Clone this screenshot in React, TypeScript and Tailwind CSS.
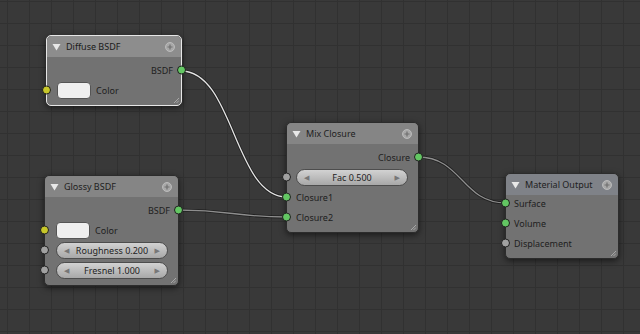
import React from "react";

type Pt = [number, number];

function link(a: Pt, b: Pt) {
  const d = Math.abs(b[0] - a[0]) * 0.5;
  return `M${a[0]} ${a[1]} C${a[0] + d} ${a[1]} ${b[0] - d} ${b[1]} ${b[0]} ${b[1]}`;
}

function Socket({ side, color }: { side: "l" | "r"; color: string }) {
  return (
    <span
      className={`absolute top-1/2 -translate-y-1/2 w-[9px] h-[9px] rounded-full border border-[#202020] ${
        side === "l" ? "left-[-5px]" : "right-[-5px]"
      }`}
      style={{ background: color }}
    />
  );
}

const GREEN = "#63c763";
const GRAY = "#a1a1a1";
const YELLOW = "#c7c729";

function Header({ title, selected, bg }: { title: string; selected?: boolean; bg: string }) {
  return (
    <div className={`flex items-center h-[21px] pl-[5px] pr-[6px] rounded-t-[5px] ${bg}`}>
      <svg width="9" height="8" viewBox="0 0 9 8" className="mr-[5px]">
        <path d="M0.5 1 L8.5 1 L4.5 7.5 Z" fill="#e8e8e8" />
      </svg>
      <span className={`flex-1 ${selected ? "text-[#1a1a1a]" : "text-[#1e1e1e]"}`}>{title}</span>
      <svg width="10" height="10" viewBox="0 0 10 10">
        <circle cx="5" cy="5" r="4.5" fill="#a8a8a8" stroke="#c4c4c4" strokeWidth="0.8" />
        <path d="M5 2.5 V7.5 M2.5 5 H7.5" stroke="#6e6e6e" strokeWidth="1.2" />
      </svg>
    </div>
  );
}

function Resize() {
  return (
    <svg width="6" height="6" viewBox="0 0 6 6" className="absolute right-[2px] bottom-[2px]">
      <path d="M1 6 L6 1 M3.5 6 L6 3.5" stroke="#b5b5b5" strokeWidth="0.8" />
    </svg>
  );
}

function Slider({ label }: { label: string }) {
  return (
    <div className="flex-1 h-[17px] rounded-full border border-[#4d4d4d] bg-gradient-to-b from-[#d2d2d2] to-[#a8a8a8] flex items-center px-[7px] text-[#1e1e1e]">
      <span className="text-[7px] text-[#777]">◀</span>
      <span className="flex-1 text-center">{label}</span>
      <span className="text-[7px] text-[#777]">▶</span>
    </div>
  );
}

function Swatch() {
  return <div className="w-[34px] h-[17px] rounded-[4px] bg-[#efefef] border border-[#555]" />;
}

function Row({ children, className = "" }: { children: React.ReactNode; className?: string }) {
  return <div className={`relative h-5 flex items-center ${className}`}>{children}</div>;
}

function Node({
  x,
  y,
  w,
  selected,
  children,
}: {
  x: number;
  y: number;
  w: number;
  selected?: boolean;
  children: React.ReactNode;
}) {
  return (
    <div
      className={`absolute rounded-[5px] bg-[#727272] shadow-[0_2px_6px_rgba(0,0,0,0.55)] border ${
        selected ? "border-[#e6e6e6]" : "border-[#2c2c2c]"
      }`}
      style={{ left: x, top: y, width: w }}
    >
      {children}
      <Resize />
    </div>
  );
}

export default function App() {
  return (
    <div
      className="relative w-[640px] h-[334px] overflow-hidden bg-[#393939] bg-[linear-gradient(to_right,#313131_1px,transparent_1px),linear-gradient(to_bottom,#313131_1px,transparent_1px)] bg-[size:22px_22px] bg-[position:7px_1px] text-[9px] leading-none text-[#1e1e1e]"
      style={{ fontFamily: '"Noto Sans", "DejaVu Sans", sans-serif' }}
    >
      <svg className="absolute inset-0" width="640" height="334">
        {[
          { p: link([181, 71], [287, 197]), c: "#e4e4e4" },
          { p: link([178, 210], [287, 217]), c: "#8e8e8e" },
          { p: link([418, 157], [506, 203]), c: "#8e8e8e" },
        ].map((l, i) => (
          <g key={i} fill="none">
            <path d={l.p} stroke="rgba(0,0,0,0.45)" strokeWidth="3" />
            <path d={l.p} stroke={l.c} strokeWidth="1.3" />
          </g>
        ))}
      </svg>

      <Node x={46} y={35} w={136} selected>
        <Header title="Diffuse BSDF" selected bg="bg-[#8d8d8d]" />
        <div className="pt-[3px] pb-[5px]">
          <Row className="justify-end pr-[8px]">
            BSDF
            <Socket side="r" color={GREEN} />
          </Row>
          <Row className="pl-[10px] gap-[5px]">
            <Swatch />
            Color
            <Socket side="l" color={YELLOW} />
          </Row>
        </div>
      </Node>

      <Node x={44} y={175} w={135}>
        <Header title="Glossy BSDF" bg="bg-[#858585]" />
        <div className="pt-[3px] pb-[5px]">
          <Row className="justify-end pr-[8px]">
            BSDF
            <Socket side="r" color={GREEN} />
          </Row>
          <Row className="pl-[11px] gap-[5px]">
            <Swatch />
            Color
            <Socket side="l" color={YELLOW} />
          </Row>
          <Row className="pl-[11px] pr-[10px]">
            <Slider label="Roughness 0.200" />
            <Socket side="l" color={GRAY} />
          </Row>
          <Row className="pl-[11px] pr-[10px]">
            <Slider label="Fresnel 1.000" />
            <Socket side="l" color={GRAY} />
          </Row>
        </div>
      </Node>

      <Node x={286} y={122} w={133}>
        <Header title="Mix Closure" bg="bg-[#858585]" />
        <div className="pt-[3px] pb-[5px]">
          <Row className="justify-end pr-[8px]">
            Closure
            <Socket side="r" color={GREEN} />
          </Row>
          <Row className="pl-[9px] pr-[10px]">
            <Slider label="Fac 0.500" />
            <Socket side="l" color={GRAY} />
          </Row>
          <Row className="pl-[9px]">
            Closure1
            <Socket side="l" color={GREEN} />
          </Row>
          <Row className="pl-[9px]">
            Closure2
            <Socket side="l" color={GREEN} />
          </Row>
        </div>
      </Node>

      <Node x={505} y={173} w={114}>
        <Header title="Material Output" bg="bg-[#7f8288]" />
        <div className="pb-[5px] -mt-[2px]">
          <Row className="pl-[8px]">
            Surface
            <Socket side="l" color={GREEN} />
          </Row>
          <Row className="pl-[8px]">
            Volume
            <Socket side="l" color={GREEN} />
          </Row>
          <Row className="pl-[8px]">
            Displacement
            <Socket side="l" color={GRAY} />
          </Row>
        </div>
      </Node>
    </div>
  );
}
